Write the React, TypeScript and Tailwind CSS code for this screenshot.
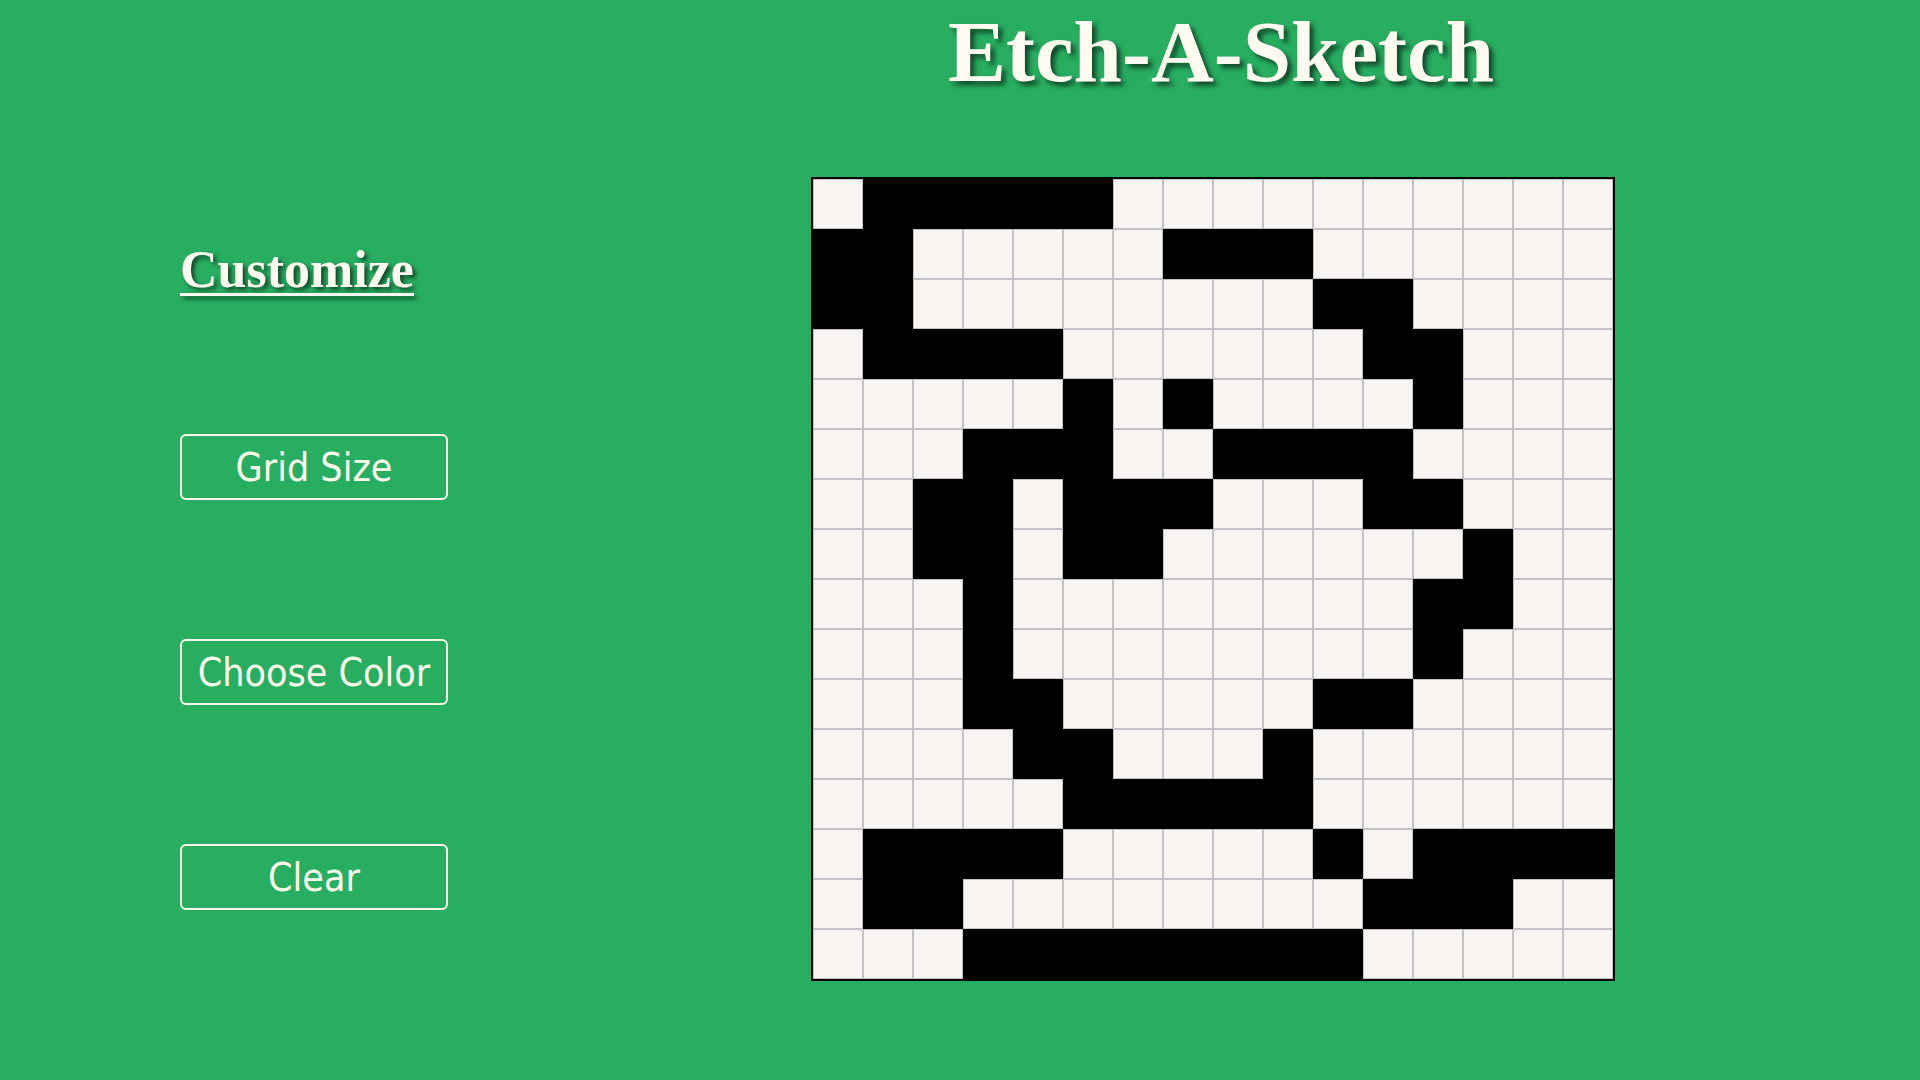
const BLACK: Record<number, number[]> = {
  0: [1, 2, 3, 4, 5],
  1: [0, 1, 7, 8, 9],
  2: [0, 1, 10, 11],
  3: [1, 2, 3, 4, 11, 12],
  4: [5, 7, 12],
  5: [3, 4, 5, 8, 9, 10, 11],
  6: [2, 3, 5, 6, 7, 11, 12],
  7: [2, 3, 5, 6, 13],
  8: [3, 12, 13],
  9: [3, 12],
  10: [3, 4, 10, 11],
  11: [4, 5, 9],
  12: [5, 6, 7, 8, 9],
  13: [1, 2, 3, 4, 10, 12, 13, 14, 15],
  14: [1, 2, 11, 12, 13],
  15: [3, 4, 5, 6, 7, 8, 9, 10],
};

const cells = Array.from({ length: 256 }, (_, i) => {
  const row = Math.floor(i / 16);
  const col = i % 16;
  return BLACK[row].includes(col);
});

const buttons = ['Grid Size', 'Choose Color', 'Clear'];

export default function App() {
  return (
    <div className="h-[1080px] w-full bg-[#27ae60] flex overflow-hidden">
      {/* SIDEBAR */}
      <aside className="w-[506px] shrink-0 pl-[180px] pt-[244px]">
        <h2 className="font-['Liberation_Serif',serif] font-bold text-[52px] leading-none text-[#fffaf0] underline decoration-[3px] underline-offset-[6px] [text-shadow:3px_3px_4px_rgba(0,0,0,0.6)] mb-[138px]">
          Customize
        </h2>
        <div className="flex flex-col gap-[139px]">
          {buttons.map(label => (
            <button
              key={label}
              className="w-[268px] h-[66px] rounded-md border-2 border-[#fdfbea] text-[#fdfbea] text-[39px] leading-none font-['DejaVu_Sans_Condensed','DejaVu_Sans',sans-serif] font-stretch-condensed flex items-center justify-center"
            >
              {label}
            </button>
          ))}
        </div>
      </aside>

      {/* MAIN */}
      <main className="flex-1 flex flex-col items-center">
        <h1 className="mt-2 ml-[16px] font-['Liberation_Serif',serif] font-bold text-[87px] leading-none text-[#fffaf0] [text-shadow:4px_4px_5px_rgba(0,0,0,0.6)]">
          Etch-A-Sketch
        </h1>
        <div className="mt-[82px] border-2 border-black grid grid-cols-[repeat(16,50px)] grid-rows-[repeat(16,50px)]">
          {cells.map((on, i) => (
            <div
              key={i}
              className={on ? 'bg-black border border-black' : 'bg-[#f7f4f2] border border-[#c4c0c8]'}
            />
          ))}
        </div>
      </main>
    </div>
  );
}
